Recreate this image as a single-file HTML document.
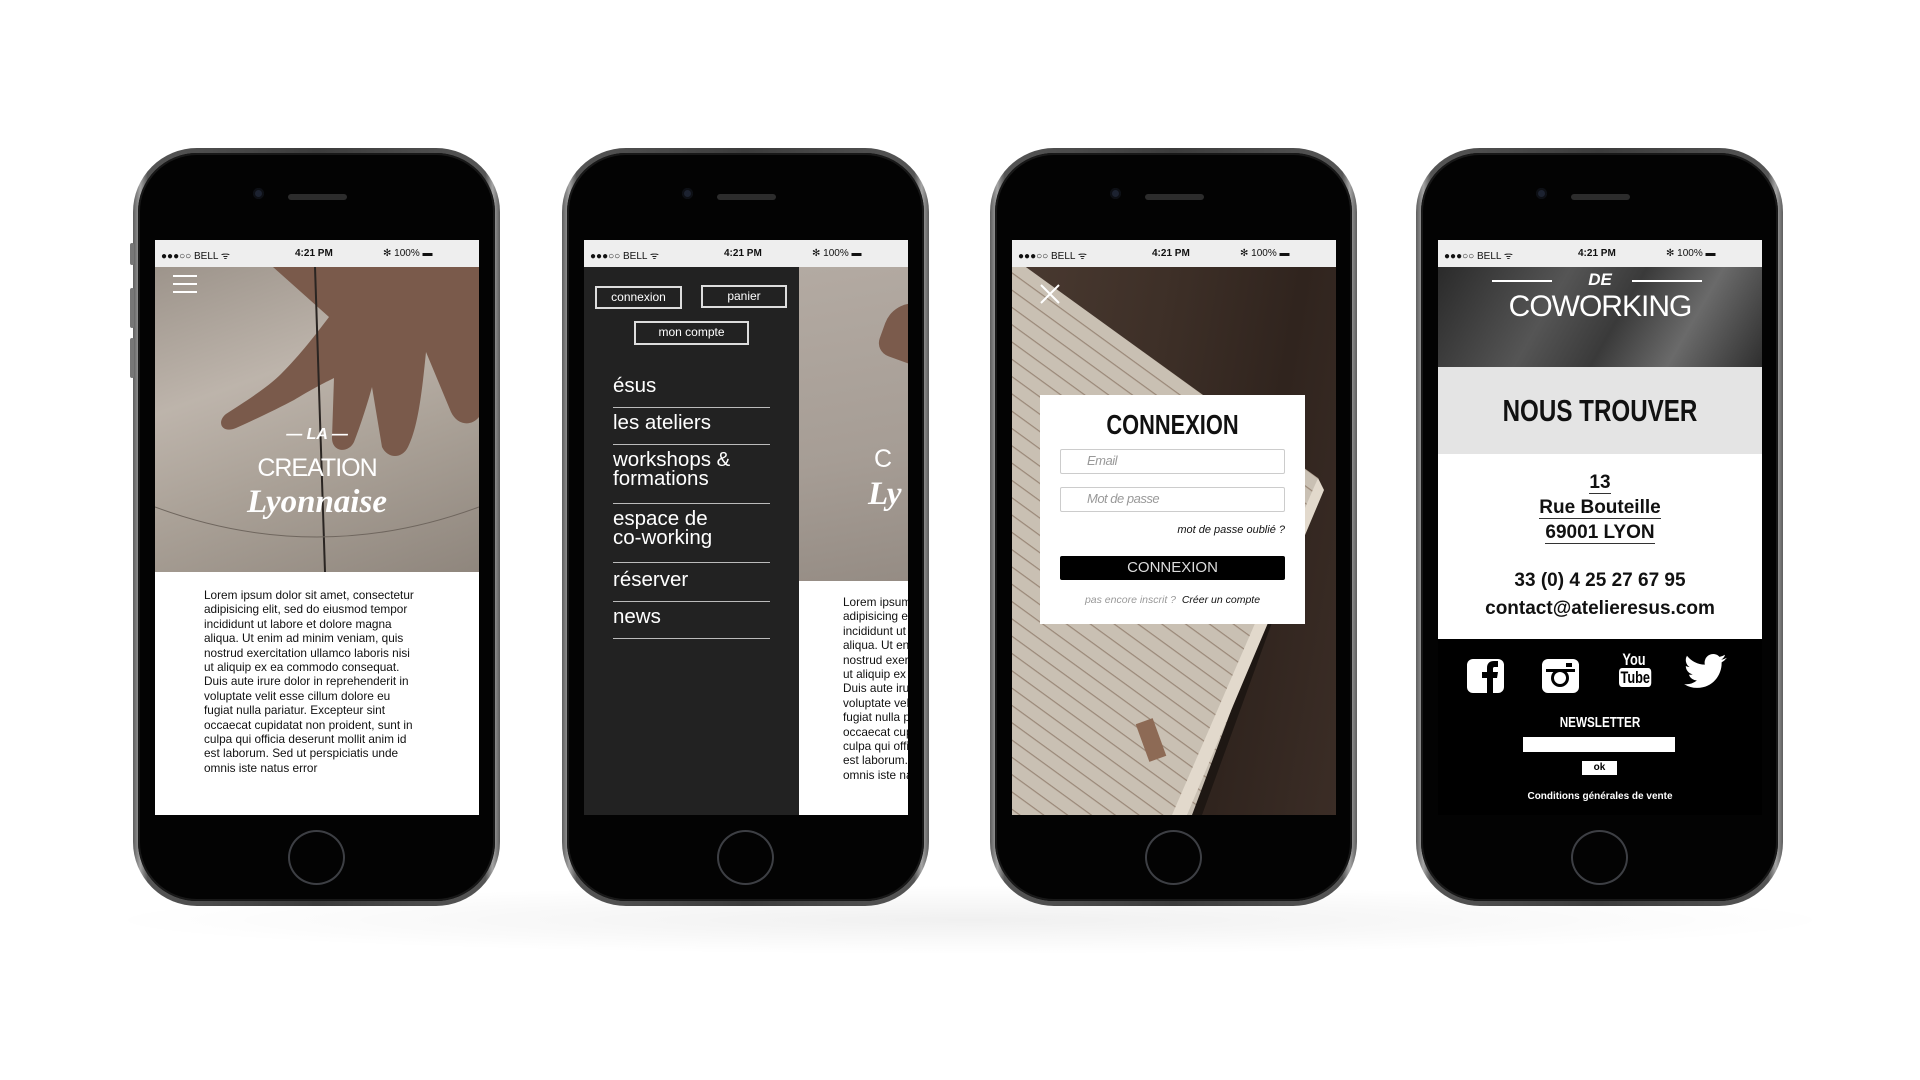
<!DOCTYPE html>
<html><head><meta charset="utf-8"><style>
*{margin:0;padding:0;box-sizing:border-box}
body{width:1920px;height:1080px;background:#fff;position:relative;overflow:hidden;font-family:"Liberation Sans",sans-serif}
.shadow{position:absolute;left:90px;top:885px;width:1760px;height:70px;background:radial-gradient(ellipse at center,rgba(0,0,0,0.06),rgba(0,0,0,0) 70%)}
.phone{position:absolute;top:148px;width:367px;height:758px;border-radius:64px;background:linear-gradient(90deg,#5e5e5e,#a4a4a4 2%,#555 4%,#3c3c3c 50%,#555 96%,#a4a4a4 98%,#5e5e5e)}
.phone .in{position:absolute;inset:5px;border-radius:59px;background:#030303;box-shadow:inset 0 0 0 2px #181818}
.cam{position:absolute;left:120px;top:40px;width:11px;height:11px;border-radius:50%;background:#1c2230;box-shadow:inset 0 0 0 2px #0d0f14}
.spk{position:absolute;left:155px;top:46px;width:59px;height:6px;border-radius:3px;background:#2c2c2c}
.home{position:absolute;left:155px;top:682px;width:57px;height:55px;border-radius:50%;border:2px solid #3d3f44}
.btnside{position:absolute;left:-3px;width:4px;background:#777;border-radius:2px}
.scr{position:absolute;left:22px;top:92px;width:324px;height:575px;overflow:hidden;background:#fff}
.sb{position:absolute;left:0;top:0;width:324px;height:27px;background:#eeeeee;font-size:10px;color:#111;z-index:5}
.sb span{position:absolute;top:8px}
.abs{position:absolute}
.cond{font-weight:bold;transform:scaleX(.78);transform-origin:center}
.lorem{font-size:11.8px;line-height:14.4px;color:#111;width:212px}
.mi{position:absolute;left:29px;width:157px;color:#fff;font-size:20.5px;line-height:21px}
.ml{position:absolute;left:29px;width:157px;height:1px;background:#bbb}
.bx{position:absolute;border:2px solid #ddd;color:#fff;font-size:12px;text-align:center;line-height:19px}
</style></head><body>
<div class="shadow"></div>

<!-- PHONE 1 -->
<div class="phone" style="left:133px">
<div class="in"></div>
<div class="btnside" style="top:95px;height:22px"></div><div class="btnside" style="top:140px;height:40px"></div><div class="btnside" style="top:190px;height:40px"></div>
<div class="cam"></div><div class="spk"></div><div class="home"></div>
<div class="scr">
 <div class="sb"><span style="left:6px">●●●○○ BELL ᯤ</span><span style="left:140px;font-weight:bold">4:21 PM</span><span style="left:228px">✻ 100% ▬</span></div>
 <div class="abs" style="left:0;top:27px;width:324px;height:305px;background:linear-gradient(160deg,#9d948b,#bdb4ab 35%,#aba298 60%,#8f867d)"></div>
 <svg class="abs" style="left:0;top:27px" width="324" height="305">
  <path d="M118 0h206v150c-8 10-22 8-28-5l-25-60c-4 40-8 75-18 95-6 12-20 12-26 0l-10-60c-4 15-12 40-18 55-6 12-22 10-22-4l2-60c-10 5-20 10-40 22-15 8-40 20-58 28-14 6-20-6-10-14 15-10 40-25 55-40 20-20 35-40 48-57z" fill="#7a5a4b"/>
  <path d="M160 0l10 305" stroke="#2a2522" stroke-width="2"/><path d="M0 240q162 60 324 0" stroke="#6f665e" fill="none"/></svg>
 <div class="abs" style="left:18px;top:35px;width:24px;height:18px;border-top:2px solid #fff;border-bottom:2px solid #fff"><div style="margin-top:6px;height:2px;background:#fff"></div></div>
 <div class="abs" style="left:0;top:186px;width:324px;text-align:center;color:#fff;font-weight:bold;font-style:italic;font-size:16px">— LA —</div>
 <div class="abs" style="left:0;top:214px;width:324px;text-align:center;color:#fff;font-size:25px;letter-spacing:-1px">CREATION</div>
 <div class="abs" style="left:0;top:244px;width:324px;text-align:center;color:#fff;font-family:'Liberation Serif',serif;font-style:italic;font-weight:bold;font-size:33px">Lyonnaise</div>
 <div class="abs lorem" style="left:49px;top:348px">Lorem ipsum dolor sit amet, consectetur adipisicing elit, sed do eiusmod tempor incididunt ut labore et dolore magna aliqua. Ut enim ad minim veniam, quis nostrud exercitation ullamco laboris nisi ut aliquip ex ea commodo consequat. Duis aute irure dolor in reprehenderit in voluptate velit esse cillum dolore eu fugiat nulla pariatur. Excepteur sint occaecat cupidatat non proident, sunt in culpa qui officia deserunt mollit anim id est laborum. Sed ut perspiciatis unde omnis iste natus error</div>
</div></div>

<!-- PHONE 2 -->
<div class="phone" style="left:562px">
<div class="in"></div>
<div class="cam"></div><div class="spk"></div><div class="home"></div>
<div class="scr" style="background:#222">
 <div class="sb"><span style="left:6px">●●●○○ BELL ᯤ</span><span style="left:140px;font-weight:bold">4:21 PM</span><span style="left:228px">✻ 100% ▬</span></div>
 <div class="abs" style="left:215px;top:27px;width:109px;height:314px;background:linear-gradient(170deg,#b3aaa2,#a69d95 60%,#958c84)"></div>
 <div class="abs" style="left:300px;top:60px;width:40px;height:60px;border-radius:30px 0 0 14px;background:#7b5b4c;transform:rotate(20deg)"></div>
 <div class="abs" style="left:290px;top:205px;color:#fff;font-size:25px">C</div>
 <div class="abs" style="left:284px;top:236px;color:#fff;font-family:'Liberation Serif',serif;font-style:italic;font-weight:bold;font-size:33px">Ly</div>
 <div class="abs" style="left:215px;top:341px;width:109px;height:234px;background:#fff;overflow:hidden"><div class="lorem" style="position:absolute;left:44px;top:14px">Lorem ipsum dolor sit amet, consectetur adipisicing elit, sed do eiusmod tempor incididunt ut labore et dolore magna aliqua. Ut enim ad minim veniam, quis nostrud exercitation ullamco laboris nisi ut aliquip ex ea commodo consequat. Duis aute irure dolor in reprehenderit in voluptate velit esse cillum dolore eu fugiat nulla pariatur. Excepteur sint occaecat cupidatat non proident, sunt in culpa qui officia deserunt mollit anim id est laborum. Sed ut perspiciatis unde omnis iste natus error</div></div>
 <div class="bx" style="left:11px;top:46px;width:87px;height:23px">connexion</div>
 <div class="bx" style="left:117px;top:45px;width:86px;height:23px">panier</div>
 <div class="bx" style="left:50px;top:81px;width:115px;height:24px">mon compte</div>
 <div class="mi" style="top:135px">ésus</div><div class="ml" style="top:167px"></div>
 <div class="mi" style="top:172px">les ateliers</div><div class="ml" style="top:204px"></div>
 <div class="mi" style="top:210px;line-height:19px">workshops &amp;<br>formations</div><div class="ml" style="top:263px"></div>
 <div class="mi" style="top:269px;line-height:19px">espace de<br>co-working</div><div class="ml" style="top:322px"></div>
 <div class="mi" style="top:329px">réserver</div><div class="ml" style="top:361px"></div>
 <div class="mi" style="top:366px">news</div><div class="ml" style="top:398px"></div>
</div></div>

<!-- PHONE 3 -->
<div class="phone" style="left:990px">
<div class="in"></div>
<div class="cam"></div><div class="spk"></div><div class="home"></div>
<div class="scr" style="background:linear-gradient(100deg,#4a3a31,#3d2f27 40%,#30241e 70%,#3b2d26)">
 <svg class="abs" style="left:0;top:0" width="324" height="575">
  <defs><pattern id="ln" width="14" height="14" patternUnits="userSpaceOnUse" patternTransform="rotate(36)"><rect width="14" height="14" fill="#c9c0b3"/><rect y="12" width="14" height="1.2" fill="#9a8878"/></pattern></defs>
  <polygon points="0,22 310,245 190,575 0,575" fill="#1e1713"/>
  <polygon points="0,17 306,238 180,575 0,575" fill="url(#ln)"/>
  <polygon points="160,575 306,238 312,250 175,575" fill="#e2d9cc"/>
  <rect x="130" y="480" width="18" height="40" fill="#8d6a55" transform="rotate(-20 139 500)"/>
 </svg>
 <div class="sb"><span style="left:6px">●●●○○ BELL ᯤ</span><span style="left:140px;font-weight:bold">4:21 PM</span><span style="left:228px">✻ 100% ▬</span></div>
 <svg class="abs" style="left:28px;top:44px" width="20" height="20"><path d="M1 1L19 19M19 1L1 19" stroke="#fff" stroke-width="2"/></svg>
 <div class="abs" style="left:28px;top:155px;width:265px;height:229px;background:#fff">
  <div class="abs cond" style="left:0;top:14px;width:265px;text-align:center;font-size:28px;color:#111">CONNEXION</div>
  <div class="abs" style="left:20px;top:54px;width:225px;height:25px;border:1px solid #ccc;border-radius:2px;color:#999;font-style:italic;font-size:13px;padding:3px 0 0 26px;letter-spacing:-.5px">Email</div>
  <div class="abs" style="left:20px;top:92px;width:225px;height:25px;border:1px solid #ccc;border-radius:2px;color:#999;font-style:italic;font-size:13px;padding:3px 0 0 26px;letter-spacing:-.5px">Mot de passe</div>
  <div class="abs" style="right:20px;top:129px;font-style:italic;font-size:11px;color:#111">mot de passe oublié ?</div>
  <div class="abs" style="left:20px;top:161px;width:225px;height:24px;background:#000;border-radius:2px;color:#ddd;font-size:15px;text-align:center;line-height:24px">CONNEXION</div>
  <div class="abs" style="left:0;top:199px;width:265px;text-align:center;font-size:10.5px;font-style:italic"><span style="color:#999">pas encore inscrit ?</span>&nbsp; <span style="color:#111">Créer un compte</span></div>
 </div>
</div></div>

<!-- PHONE 4 -->
<div class="phone" style="left:1416px">
<div class="in"></div>
<div class="cam"></div><div class="spk"></div><div class="home"></div>
<div class="scr">
 <div class="sb"><span style="left:6px">●●●○○ BELL ᯤ</span><span style="left:140px;font-weight:bold">4:21 PM</span><span style="left:228px">✻ 100% ▬</span></div>
 <div class="abs" style="left:0;top:27px;width:324px;height:100px;background:linear-gradient(120deg,#2a2a2a,#555 35%,#3a3a3a 55%,#6a6a6a 75%,#2f2f2f)"></div>
 <div class="abs" style="left:54px;top:40px;width:60px;height:2px;background:#fff"></div><div class="abs" style="left:194px;top:40px;width:70px;height:2px;background:#fff"></div>
 <div class="abs" style="left:0;top:30px;width:324px;text-align:center;color:#fff;font-weight:bold;font-style:italic;font-size:17px">DE</div>
 <div class="abs" style="left:0;top:50px;width:324px;text-align:center;color:#fff;font-size:30px;letter-spacing:-1px">COWORKING</div>
 <div class="abs" style="left:0;top:127px;width:324px;height:87px;background:#e4e4e4"></div>
 <div class="abs cond" style="left:0;top:153px;width:324px;text-align:center;font-size:31px;color:#111">NOUS TROUVER</div>
 <div class="abs" style="left:0;top:230px;width:324px;text-align:center;font-weight:bold;font-size:19px;line-height:25px;color:#111">
  <span style="border-bottom:1px solid #333">13</span><br><span style="border-bottom:1px solid #333">Rue Bouteille</span><br><span style="border-bottom:1px solid #333">69001 LYON</span></div>
 <div class="abs" style="left:0;top:330px;width:324px;text-align:center;font-weight:bold;font-size:19px;color:#111">33 (0) 4 25 27 67 95</div>
 <div class="abs" style="left:0;top:358px;width:324px;text-align:center;font-weight:bold;font-size:19px;color:#111">contact@atelieresus.com</div>
 <div class="abs" style="left:0;top:399px;width:324px;height:176px;background:#000"></div>
 <svg class="abs" style="left:29px;top:418px" width="38" height="38"><rect x="0" y="1" width="37" height="34" rx="6" fill="#fff"/><path d="M20 35V20h-5v-6h5v-4c0-5 3-7 7-7h4v6h-3c-2 0-2 1-2 2v3h5l-1 6h-4v15z" fill="#000"/></svg>
 <svg class="abs" style="left:104px;top:418px" width="38" height="38"><rect x="0" y="1" width="37" height="34" rx="6" fill="#fff"/><rect x="4" y="11" width="29" height="3" fill="#000"/><circle cx="18" cy="20" r="9" fill="#000"/><circle cx="18" cy="20" r="6" fill="#fff"/><rect x="24" y="5" width="6" height="4" fill="#000"/></svg>
 <div class="abs" style="left:176px;top:411px;width:40px;text-align:center;color:#fff;font-size:17px;line-height:18px;font-weight:bold;transform:scaleX(.75)">You<br><span style="background:#fff;color:#000;border-radius:4px;padding:0 2px">Tube</span></div>
 <svg class="abs" style="left:245px;top:414px" width="46" height="40" viewBox="0 0 24 21"><path d="M23 2a10 10 0 0 1-3 1 4.5 4.5 0 0 0 2-2.6 9 9 0 0 1-2.9 1.1A4.5 4.5 0 0 0 11.4 5.6 12.8 12.8 0 0 1 2 .9a4.5 4.5 0 0 0 1.4 6A4.5 4.5 0 0 1 1.4 6.3a4.5 4.5 0 0 0 3.6 4.4 4.5 4.5 0 0 1-2 .1 4.5 4.5 0 0 0 4.2 3.1A9 9 0 0 1 .5 15.8a12.8 12.8 0 0 0 6.9 2c8.3 0 12.8-6.9 12.8-12.8v-.6A9 9 0 0 0 23 2z" fill="#fff"/></svg>
 <div class="abs cond" style="left:0;top:474px;width:324px;text-align:center;color:#fff;font-size:15px">NEWSLETTER</div>
 <div class="abs" style="left:85px;top:497px;width:152px;height:15px;background:#fff"></div>
 <div class="abs" style="left:144px;top:521px;width:35px;height:14px;background:#fff;font-size:10px;font-weight:bold;text-align:center;line-height:14px">ok</div>
 <div class="abs" style="left:0;top:551px;width:324px;text-align:center;color:#fff;font-size:10px;font-weight:bold">Conditions générales de vente</div>
</div></div>
</body></html>
